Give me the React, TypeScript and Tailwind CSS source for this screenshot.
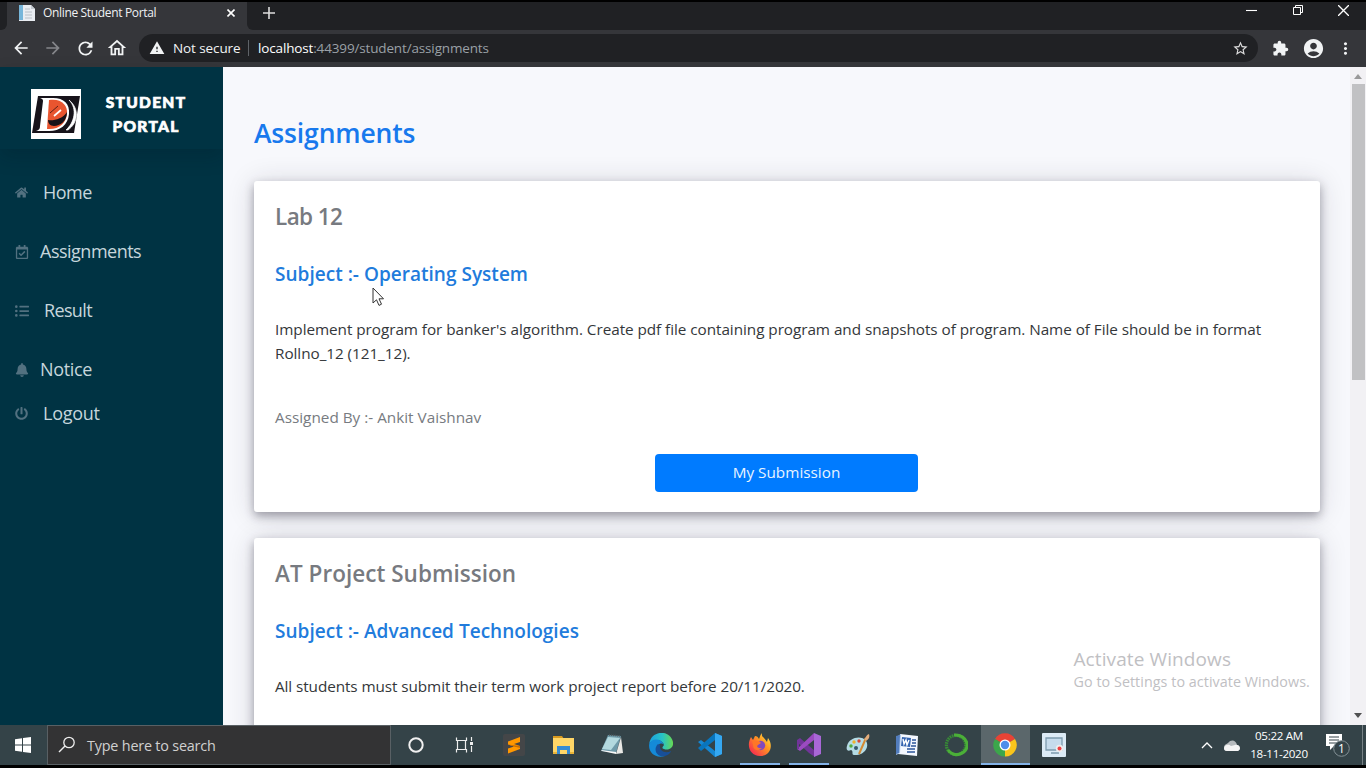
import type { ReactNode } from "react";
import { FaHome, FaRegCalendarCheck, FaListUl, FaBell, FaPowerOff } from "react-icons/fa";
import { MdArrowBack, MdArrowForward, MdRefresh, MdOutlineHome, MdWarning, MdStarBorder, MdExtension, MdAccountCircle, MdMoreVert } from "react-icons/md";

function Logo() {
  return (
    <svg viewBox="0 0 50 50" className="h-[50px] w-[50px] shrink-0 bg-white">
      <path d="M7 7H49L43 44H1Z" fill="#17131a" />
      <path d="M9 9H22C33 9 39 15 38 25C37 36 29 42 18 42H5C8 41 9 40 9 37L12 12C12 10 11 10 9 9Z" fill="#fff" />
      <path d="M18 11C30 9 37 16 36 25C35 34 28 41 16 40Z" fill="#e9552f" />
      <path d="M17 31C22 32 32 30 36 23C36 32 29 37 23 37C19 37 17 34 17 31Z" fill="#17131a" />
      <path d="M38 11C47 20 43 34 35 41L37 41C47 34 49 20 38 11Z" fill="#fff" stroke="#fff" strokeWidth=".7" />
      <path d="M23 27L30 21" stroke="#fff" strokeWidth="1.7" />
      <path d="M19 24L27 17" stroke="#5c2118" strokeWidth="1" />
    </svg>
  );
}

function BrowserChrome() {
  return (
    <header className="shrink-0 bg-black pt-[2px] font-['Open_Sans',sans-serif]">
      <div className="flex h-7 bg-[#202124]">
        <div className="h-full w-[7px] bg-[#35363a]"><div className="h-full rounded-br-md bg-[#202124]" /></div>
        <div className="flex h-full w-[240px] items-start bg-[#35363a] pt-[3px]">
          <svg viewBox="0 0 16 16" className="ml-3 h-4 w-4">
            <path d="M0 0H12L16 4V16H0Z" fill="#e9edf2" />
            <path d="M0 0H4V15H0Z" fill="#77b6da" />
            <path d="M6 4H11M6 7H13M6 10H13M6 13H13" stroke="#b9c0c8" />
            <path d="M12 0V4H16Z" fill="#c5cbd1" />
          </svg>
          <span className="ml-2 w-[184px] shrink-0 text-[12px] leading-4 tracking-[-0.34px] text-[#f0f1f3]">Online Student Portal</span>
          <svg viewBox="0 0 8 8" className="mt-1 h-2 w-2 shrink-0"><path d="M0.5 .5L7.5 7.5M7.5 .5L.5 7.5" stroke="#fff" strokeWidth="1.6" /></svg>
        </div>
        <div className="h-full w-[6px] bg-[#35363a]"><div className="h-full rounded-bl-md bg-[#202124]" /></div>
        <svg viewBox="0 0 12 12" className="mt-[5px] ml-[10px] h-3 w-3"><path d="M6 0V12M0 6H12" stroke="#ddd" strokeWidth="1.6" /></svg>
        <div className="ml-auto flex w-[120px] pt-[3px]">
          <svg viewBox="0 0 10 10" className="h-[11px] w-[11px]"><path d="M0 5H10" stroke="#fff" /></svg>
          <svg viewBox="0 0 10 10" className="ml-[36px] h-[10px] w-[10px]"><path d="M.5 2.5H7.5V9.5H.5ZM2.5 2V.5H9.5V7.5H8" fill="none" stroke="#fff" /></svg>
          <svg viewBox="0 0 10 10" className="ml-[35px] h-[11px] w-[11px]"><path d="M0 0L10 10M10 0L0 10" stroke="#fff" strokeWidth="1.2" /></svg>
        </div>
      </div>
      <div className="flex h-[37px] items-center bg-[#35363a] pb-px pl-[11px] text-[#f1f3f4]">
        <MdArrowBack size={20} />
        <MdArrowForward size={20} className="ml-3 text-[#85868a]" />
        <MdRefresh size={21} className="ml-[12px]" />
        <MdOutlineHome size={22} className="ml-[10px]" />
        <div className="ml-[11px] flex h-7 w-[1119px] items-center rounded-full bg-[#202124] pl-[10px]">
          <MdWarning size={16} />
          <span className="ml-[8px] w-[75px] text-[13.5px] leading-5 tracking-[-0.1px] whitespace-nowrap">Not secure</span>
          <span className="h-4 w-px bg-[#5f6368]" />
          <span className="ml-[9px] text-[13.5px] leading-5 tracking-[-0.15px] whitespace-nowrap text-[#9aa0a6]"><span className="text-white">localhost</span>:44399/student/assignments</span>
          <MdStarBorder size={17} className="mr-[9px] ml-auto text-[#ddd]" />
        </div>
        <MdExtension size={17} className="ml-[14px]" />
        <MdAccountCircle size={23} className="ml-[13px]" />
        <MdMoreVert size={19} className="ml-[11px]" />
      </div>
    </header>
  );
}

function MenuItem({ icon, label, className }: { icon: ReactNode; label: string; className: string }) {
  return (
    <a className={`flex h-[30px] items-center pl-[15px] text-[18px] text-[#c6d6dc] ${className}`}>
      <span className="w-[14px] shrink-0 pt-px text-[#527180]">{icon}</span>
      {label}
    </a>
  );
}

function Sidebar() {
  return (
    <aside className="flex w-[223px] shrink-0 flex-col bg-[#003343]">
      <div className="flex h-[82px] shrink-0 items-start pt-[22px] pl-[31px] shadow-[0_8px_18px_rgba(0,20,30,0.2)]">
        <Logo />
        <div className="ml-[20px] w-[90px] pt-[1px] text-center font-['Lato',sans-serif] text-[15.5px] leading-6 font-black tracking-[1.3px] text-white [-webkit-text-stroke:0.7px_white]">STUDENT PORTAL</div>
      </div>
      <nav className="flex flex-col pt-[28px]">
        <MenuItem className="gap-[14px] tracking-[-0.5px]" icon={<FaHome size={13} />} label="Home" />
        <MenuItem className="mt-[29px] gap-[11px] tracking-[-0.5px]" icon={<FaRegCalendarCheck size={14} />} label="Assignments" />
        <MenuItem className="mt-[29px] gap-[15px] tracking-[-0.65px]" icon={<FaListUl size={14} />} label="Result" />
        <MenuItem className="mt-[29px] gap-[11px] tracking-[-0.35px]" icon={<FaBell size={14} />} label="Notice" />
        <MenuItem className="mt-[14px] gap-[14px] tracking-[-0.25px]" icon={<FaPowerOff size={13} />} label="Logout" />
      </nav>
    </aside>
  );
}

const cardClass = "rounded-[3px] bg-white pl-[21px] shadow-[0_4px_10px_rgba(35,32,50,0.38),0_2px_28px_rgba(35,32,50,0.16)]";

function Assignments() {
  return (
    <main className="relative flex-1 overflow-hidden bg-[#f7f8fc] pt-[48px] pr-[30px] pl-[31px]">
      <h1 className="h-9 text-[26.5px] leading-9 font-semibold tracking-[-0.15px] text-[#1879ed]">Assignments</h1>
      <section className={`mt-[30px] h-[331px] pt-[22px] ${cardClass}`}>
        <h2 className="text-[22.5px] leading-7 font-semibold tracking-[-0.6px] text-[#777a80]">Lab 12</h2>
        <h3 className="mt-[31px] text-[19px] leading-6 font-semibold tracking-[0.02px] text-[#217bdc]">Subject :- Operating System</h3>
        <p className="mt-[31px] text-[15.3px] leading-6 tracking-[-0.053px] text-[#34373a]">Implement program for banker's algorithm. Create pdf file containing program and snapshots of program. Name of File should be in format<br />Rollno_12 (121_12).</p>
        <p className="mt-10 text-[15.3px] leading-6 text-[#777b81]">Assigned By :- Ankit Vaishnav</p>
        <button className="mt-[24.5px] ml-[380px] block h-[38px] w-[263px] rounded bg-[#007bff] text-[15.3px] text-[#e8f4ff]">My Submission</button>
      </section>
      <section className={`mt-[26px] h-[300px] pt-[22px] ${cardClass}`}>
        <h2 className="text-[22.5px] leading-7 font-semibold tracking-[0.03px] text-[#777a80]">AT Project Submission</h2>
        <h3 className="mt-[31px] text-[19px] leading-6 font-semibold tracking-[0.02px] text-[#217bdc]">Subject :- Advanced Technologies</h3>
        <p className="mt-[31px] text-[15.3px] leading-6 tracking-[-0.083px] text-[#34373a]">All students must submit their term work project report before 20/11/2020.</p>
      </section>
      <div className="absolute top-[578px] left-[850.5px] whitespace-nowrap text-[#bfc0c3]">
        <div className="text-[19px] leading-7 tracking-[0.1px]">Activate Windows</div>
        <div className="text-[14.3px] leading-[18px] tracking-[0.06px]">Go to Settings to activate Windows.</div>
      </div>
      <svg viewBox="0 0 12 20" className="absolute top-[220px] left-[149px] h-5 w-3"><path d="M1 1V16L4.5 12.8L7 18.4L9.5 17.2L7 11.8H11.5Z" fill="#fff" stroke="#333" /></svg>
    </main>
  );
}

function Scrollbar() {
  return (
    <div className="flex w-4 shrink-0 flex-col items-center bg-[#f2f1f4]">
      <svg viewBox="0 0 8 5" className="mt-[7px] h-[5px] w-2"><path d="M0 5L4 0L8 5Z" fill="#999" /></svg>
      <div className="mt-[5px] h-[296px] w-[13px] bg-[#c1c1c3]" />
      <svg viewBox="0 0 8 5" className="mt-auto mb-[7px] h-[5px] w-2"><path d="M0 0H8L4 5Z" fill="#505050" /></svg>
    </div>
  );
}

const svgClass = "h-6 w-6";
const apps: { name: string; open?: boolean; active?: boolean; art: ReactNode }[] = [
  { name: "cortana", art: <svg viewBox="0 0 24 24" className={svgClass}><circle cx="12" cy="12" r="6.7" fill="none" stroke="#f0f0f0" strokeWidth="2" /></svg> },
  { name: "tasks", art: <svg viewBox="0 0 24 24" className={svgClass}><path d="M3.5 4.5V7.5H13.5V4.5M3.5 19.5V16.5H13.5V19.5M4.5 7.5V16.5H12.5V7.5ZM18.5 4V8M18.5 13V19" fill="none" stroke="#eee" strokeWidth="1.2" /><path d="M17 9H20V12H17Z" fill="#eee" /></svg> },
  { name: "sublime", art: <svg viewBox="0 0 24 24" className={svgClass}><rect x="1" y="1" width="22" height="22" rx="2" fill="#444648" /><path d="M6 8.5L18 4V9L12 11L18 13V16L6 20.5V15.5L12 13.5L6 11.5Z" fill="#ff9800" /><path d="M6 11.5L18 13V15L12 13.5Z" fill="#cc6e00" /></svg> },
  { name: "explorer", art: <svg viewBox="0 0 24 24" className={svgClass}><path d="M2 3H11L13 6H2Z" fill="#d89a20" /><path d="M2 5H23V21H2Z" fill="#ffd667" /><path d="M6 13H19V21H16V17H9V21H6Z" fill="#378bd2" /><path d="M2 19H6V21H2ZM19 19H23V21H19Z" fill="#eab539" /></svg> },
  { name: "notepad", art: <svg viewBox="0 0 24 24" className={svgClass}><path d="M8 2L21 3L16 20L1 18Z" fill="#6e9aa9" /><path d="M8 4L20 5L11 17L2 16Z" fill="#b3d9df" /><path d="M21 4L23 20L16 21Z" fill="#e9e9e6" /><path d="M1 17L16 19V21L2 18Z" fill="#f8f8f8" /><path d="M9 2L21 3" stroke="#535b5e" strokeWidth="1.5" strokeDasharray="1 1" /></svg> },
  { name: "edge", art: <svg viewBox="0 0 24 24" className={svgClass}><defs><linearGradient id="edgeTop"><stop stopColor="#1ba0df" /><stop offset=".55" stopColor="#28c3c6" /><stop offset="1" stopColor="#67d952" /></linearGradient></defs><path d="M.2 11C2-3 21-4 24 9C25 15 19 18 15 16C12 15 14 14 15 12C14 7 5 4 .2 11Z" fill="url(#edgeTop)" /><path d="M.2 11C3 5 12 5 15 12C12 9 9 11 9 15C9 20 14 23 16 23C6 26-1 19 .2 11Z" fill="#148ad8" /><path d="M9 11C3 17 9 25 16 23C20 22 22 19 22 18C16 21 10 18 11 12Z" fill="#174f99" /></svg> },
  { name: "vscode", art: <svg viewBox="0 0 24 24" className={svgClass}><path d="M17 0L24 3V21L17 24L0 9L3 7L17 18Z" fill="#1687d2" /><path d="M17 0V7L3 18L0 15Z" fill="#0875bd" /><path d="M17 0L24 3V21L17 24Z" fill="#35a8f2" /></svg> },
  { name: "firefox", open: true, art: <svg viewBox="0 0 24 24" className={svgClass}><defs><linearGradient id="fox" x1="1" x2="0" y2="1"><stop stopColor="#fff34c" /><stop offset=".4" stopColor="#ff9721" /><stop offset="1" stopColor="#f3125b" /></linearGradient></defs><path d="M14 0C13 4 17 5 19 9L20 5C26 13 22 23 12 23C2 23-2 13 3 4L5 7L7 3C9 3 10 4 11 6C12 4 12 2 14 0Z" fill="url(#fox)" /><circle cx="12.5" cy="12.5" r="4.7" fill="#8149bd" /><path d="M4 7L11 8L13 10L10 12C8 13 10 16 14 15C10 19 5 17 5 12Z" fill="#ff7627" /></svg> },
  { name: "studio", open: true, art: <svg viewBox="0 0 24 24" className={svgClass}><path d="M0 7L3 5L18 18V24L12 20L0 9Z" fill="#713499" /><path d="M17 0V7L3 18L0 16Z" fill="#9b4bc0" /><path d="M17 0L24 3V21L17 24Z" fill="#a967d7" /><path d="M0 7H2V16H0Z" fill="#713499" /></svg> },
  { name: "paint", art: <svg viewBox="0 0 24 24" className={svgClass}><path d="M1 13C3 4 16 2 20 8C24 14 18 23 8 22C5 22 8 18 5 17C1 19 0 16 1 13Z" fill="#b5dce5" /><circle cx="5" cy="13" r="1.7" fill="#51aa3b" /><circle cx="8" cy="9" r="1.7" fill="#edb42b" /><circle cx="13" cy="8" r="1.7" fill="#d94837" /><circle cx="10" cy="15" r="2" fill="#36596b" /><path d="M13 21L20 5" stroke="#d48931" strokeWidth="2" /><path d="M18 6C20 5 20 2 23 1C24 4 23 6 20 8Z" fill="#e3ac7b" /></svg> },
  { name: "word", art: <svg viewBox="0 0 24 24" className={svgClass}><path d="M5 1L23 3L22 23L3 21Z" fill="#f4f8ff" /><path d="M3 3L6 1L5 20L1 22Z" fill="#abc6eb" /><path d="M1 3L5 2L4 20L1 21Z" fill="#527dbd" /><path d="M7 4L16 5L15 14L6 13Z" fill="#3565b1" /><path d="M8 6L9 11L11 7L12 12L14 7" stroke="#fff" strokeWidth="1.4" fill="none" /><path d="M17 7H21M17 10H21M16 13H21M12 16H20M12 19H20" stroke="#2d559a" strokeWidth="1.4" /></svg> },
  { name: "anaconda", art: <svg viewBox="0 0 24 24" className={svgClass}><circle cx="12" cy="12" r="9.6" fill="none" stroke="#378d35" strokeWidth="3.2" strokeDasharray="1.6 .8" /><path d="M10 2C24 1 28 17 16 21C11 23 6 20 4 17" fill="none" stroke="#4baf38" strokeWidth="3.1" /></svg> },
  { name: "chrome", open: true, active: true, art: <svg viewBox="0 0 24 24" className={svgClass}><path d="M12 12L2 6A11.5 11.5 0 0 1 22 6Z" fill="#e94335" /><path d="M12 12V23.5A11.5 11.5 0 0 1 2 6Z" fill="#3ca64b" /><path d="M12 12L22 6A11.5 11.5 0 0 1 12 23.5Z" fill="#fbc51b" /><circle cx="12" cy="12" r="5.5" fill="#fff" /><circle cx="12" cy="12" r="4.2" fill="#4d8eea" /></svg> },
  { name: "recorder", art: <svg viewBox="0 0 24 24" className={svgClass}><rect width="24" height="24" rx="1" fill="#dcebf6" /><path d="M4 5H20V17H4ZM9 20H17" fill="#c6dced" stroke="#7e9caf" strokeWidth="1.3" /><circle cx="17.5" cy="15.5" r="3.7" fill="#eee" /><circle cx="17.5" cy="15.5" r="2" fill="#ee4144" /></svg> },
];

function Taskbar() {
  return (
    <footer className="flex h-[43px] shrink-0 border-b-[3px] border-black bg-[#344348] font-['Open_Sans',sans-serif] text-white">
      <div className="flex w-[47px] items-center pl-[15px]">
        <svg viewBox="0 0 16 16" className="h-4 w-4"><path d="M0 2.2L7 1.2V7.5H0ZM8 1L16 0V7.5H8ZM0 8.5H7V14.8L0 13.8ZM8 8.5H16V16L8 15Z" fill="#fff" /></svg>
      </div>
      <div className="flex w-[344px] items-center border border-[#596064] bg-[#333334] pl-[10px]">
        <svg viewBox="0 0 18 18" className="h-[18px] w-[18px]"><circle cx="11" cy="6.5" r="5.2" fill="none" stroke="#eee" strokeWidth="1.3" /><path d="M7 10L1 16" stroke="#eee" strokeWidth="1.4" /></svg>
        <span className="ml-[11px] pt-px text-[14.4px] leading-5 tracking-[-0.2px] text-[#d0d0d0]">Type here to search</span>
      </div>
      <div className="flex">
        {apps.map((app) => (
          <div key={app.name} className={`flex w-[49.15px] justify-center ${app.active ? "bg-[#5b676b]" : ""}`}>
            <div className={`flex shrink-0 items-center justify-center border-b-2 pt-[2px] ${app.active ? "w-full" : "w-10"} ${app.open ? "border-[#83b2e7]" : "border-transparent"}`}>{app.art}</div>
          </div>
        ))}
      </div>
      <div className="ml-auto flex w-[165px] items-center">
        <svg viewBox="0 0 12 8" className="h-2 w-3"><path d="M1 7L6 2L11 7" fill="none" stroke="#fff" strokeWidth="1.3" /></svg>
        <svg viewBox="0 0 16 11" className="ml-[11px] h-[11px] w-4"><path d="M0 8C0 4 3 4 4 3C7-1 12 0 13 5C17 5 17 11 13 11H3C1 11 0 10 0 8Z" fill="#b5babd" /><path d="M0 8C1 4 5 4 7 6L11 5C15 4 18 9 14 11H3C1 11 0 10 0 8Z" fill="#f4f4f4" /></svg>
        <div className="ml-[6px] w-[66px] text-center text-[11.6px] leading-[18px] tracking-[-0.3px] whitespace-nowrap"><div>05:22 AM</div><div>18-11-2020</div></div>
        <svg viewBox="0 0 26 24" className="ml-[13px] h-6 w-[26px] shrink-0"><path d="M1 1H17V13H9L5 17V13H1Z" fill="#fff" /><path d="M4 4H14M4 7H14M4 10H11" stroke="#344348" strokeWidth="1.2" /><circle cx="16.5" cy="15.5" r="7.8" fill="#344348" stroke="#839095" /><text x="16.5" y="19.7" textAnchor="middle" fontFamily="Open Sans" fontSize="12" fill="#fff">1</text></svg>
        <span className="ml-auto h-full w-px bg-[#778185]" /><span className="w-[3px]" />
      </div>
    </footer>
  );
}

export default function App() {
  return (
    <div className="flex h-[768px] w-[1366px] flex-col overflow-hidden font-['Open_Sans',sans-serif]">
      <BrowserChrome />
      <div className="flex min-h-0 flex-1"><Sidebar /><Assignments /><Scrollbar /></div>
      <Taskbar />
    </div>
  );
}
